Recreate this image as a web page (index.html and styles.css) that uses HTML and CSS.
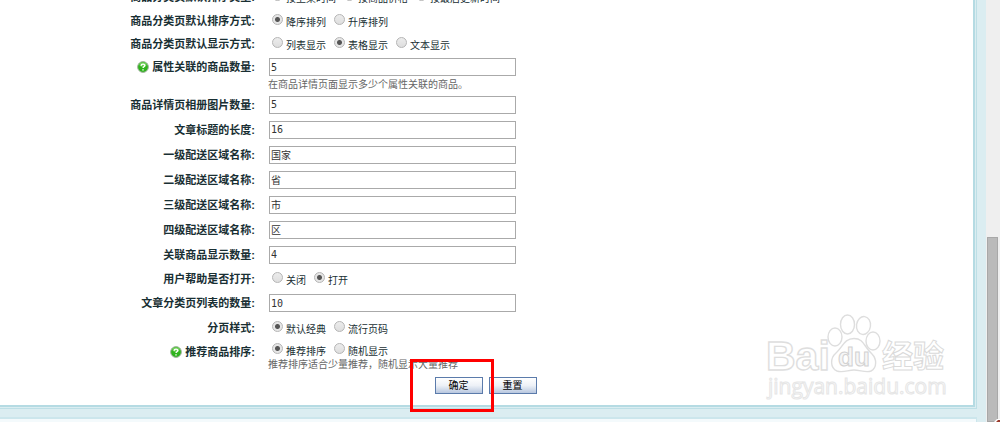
FILE: index.html
```html
<!DOCTYPE html>
<html lang="zh-CN">
<head>
<meta charset="utf-8">
<title>商店设置</title>
<link rel="stylesheet" href="styles.css">
</head>
<body>
<main class="page">
  <div class="panel">
    <form class="settings">
      <div class="row" role="radiogroup" aria-labelledby="l-type">
        <span class="name" id="l-type">商品分类页默认排序类型:</span>
        <div class="field options">
          <label class="option"><input type="radio" name="type" checked>按上架时间</label>
          <label class="option"><input type="radio" name="type">按商品价格</label>
          <label class="option"><input type="radio" name="type">按最后更新时间</label>
        </div>
      </div>
      <div class="row short" role="radiogroup" aria-labelledby="l-order">
        <span class="name" id="l-order">商品分类页默认排序方式:</span>
        <div class="field options">
          <label class="option"><input type="radio" name="order" checked>降序排列</label>
          <label class="option"><input type="radio" name="order">升序排列</label>
        </div>
      </div>
      <div class="row short" role="radiogroup" aria-labelledby="l-view">
        <span class="name" id="l-view">商品分类页默认显示方式:</span>
        <div class="field options">
          <label class="option"><input type="radio" name="view">列表显示</label>
          <label class="option"><input type="radio" name="view" checked>表格显示</label>
          <label class="option"><input type="radio" name="view">文本显示</label>
        </div>
      </div>
      <div class="row">
        <label class="name" for="related">
          <svg class="help" viewBox="0 0 12 12" aria-hidden="true"><circle cx="6" cy="6" r="5.4" fill="#2fb31c" stroke="#a5b3a3"/><ellipse cx="6" cy="3.6" rx="3.6" ry="2.4" fill="#6fd058"/><path d="M4.2 4.7C4.2 2.5 7.9 2.6 7.8 4.6 7.7 5.8 6 5.8 6 7.1M6 8.3v1.2" fill="none" stroke="#fff" stroke-width="1.4"/></svg>属性关联的商品数量:</label>
        <div class="field"><input class="text" id="related" type="text" value="5"></div>
        <p class="hint">在商品详情页面显示多少个属性关联的商品。</p>
      </div>
      <div class="row tall"><label class="name" for="album">商品详情页相册图片数量:</label><div class="field"><input class="text" id="album" type="text" value="5"></div></div>
      <div class="row tall"><label class="name" for="title">文章标题的长度:</label><div class="field"><input class="text" id="title" type="text" value="16"></div></div>
      <div class="row tall"><label class="name" for="area1">一级配送区域名称:</label><div class="field"><input class="text" id="area1" type="text" value="国家"></div></div>
      <div class="row tall"><label class="name" for="area2">二级配送区域名称:</label><div class="field"><input class="text" id="area2" type="text" value="省"></div></div>
      <div class="row tall"><label class="name" for="area3">三级配送区域名称:</label><div class="field"><input class="text" id="area3" type="text" value="市"></div></div>
      <div class="row tall"><label class="name" for="area4">四级配送区域名称:</label><div class="field"><input class="text" id="area4" type="text" value="区"></div></div>
      <div class="row tall"><label class="name" for="linked">关联商品显示数量:</label><div class="field"><input class="text" id="linked" type="text" value="4"></div></div>
      <div class="row" role="radiogroup" aria-labelledby="l-help">
        <span class="name" id="l-help">用户帮助是否打开:</span>
        <div class="field options">
          <label class="option"><input type="radio" name="help">关闭</label>
          <label class="option"><input type="radio" name="help" checked>打开</label>
        </div>
      </div>
      <div class="row"><label class="name" for="articles">文章分类页列表的数量:</label><div class="field"><input class="text" id="articles" type="text" value="10"></div></div>
      <div class="row tall" role="radiogroup" aria-labelledby="l-pager">
        <span class="name" id="l-pager">分页样式:</span>
        <div class="field options">
          <label class="option"><input type="radio" name="pager" checked>默认经典</label>
          <label class="option"><input type="radio" name="pager">流行页码</label>
        </div>
      </div>
      <div class="row short" role="radiogroup" aria-labelledby="l-rec">
        <span class="name" id="l-rec">
          <svg class="help" viewBox="0 0 12 12" aria-hidden="true"><circle cx="6" cy="6" r="5.4" fill="#2fb31c" stroke="#a5b3a3"/><ellipse cx="6" cy="3.6" rx="3.6" ry="2.4" fill="#6fd058"/><path d="M4.2 4.7C4.2 2.5 7.9 2.6 7.8 4.6 7.7 5.8 6 5.8 6 7.1M6 8.3v1.2" fill="none" stroke="#fff" stroke-width="1.4"/></svg>推荐商品排序:</span>
        <div class="field options compact">
          <label class="option"><input type="radio" name="rec" checked>推荐排序</label>
          <label class="option"><input type="radio" name="rec">随机显示</label>
        </div>
        <p class="hint close">推荐排序适合少量推荐，随机显示大量推荐</p>
      </div>
      <div class="actions">
        <span class="marked"><button class="button" type="submit">确定</button></span>
        <button class="button" type="reset">重置</button>
      </div>
    </form>
  </div>
  <div class="panel-next"></div>
  <svg class="watermark" viewBox="0 0 182 90" role="img" aria-label="Baidu 经验">
    <g fill="#fff" stroke="#dedede" stroke-width="1.4">
      <text class="wm-logo" x="1" y="57">Bai</text>
      <ellipse cx="70" cy="24" rx="7" ry="9"/>
      <ellipse cx="82.500" cy="11.500" rx="7" ry="9.500"/>
      <ellipse cx="98.500" cy="12.500" rx="7" ry="9" transform="rotate(8 98.500 12.500)"/>
      <ellipse cx="108" cy="28" rx="7" ry="9"/>
      <path d="M89 25.500C79 25.500 78 34 71 40C65 45 65 55 72 58C78 60 83 57 89 57C95 57 101 60 106 58C112 55 112 46 107 41C99 34 99 25.500 89 25.500Z"/>
    </g>
    <text class="wm-du" x="73" y="53">du</text>
    <text class="wm-cn" x="117" y="54">经验</text>
    <text class="wm-url" x="3" y="81">jingyan.baidu.com</text>
  </svg>
</main>
<div class="scrollbar" aria-hidden="true"><div class="thumb"></div>
  <svg class="corner" viewBox="0 0 6 3"><path d="M0 3L3 0H6V3Z" fill="#fff"/><path d="M2 3L4 1H6V3Z" fill="#9b3a2c"/></svg>
</div>
</body>
</html>
```
FILE: styles.css
```css
* { box-sizing: border-box; }
body {
  margin: 0;
  display: flex;
  height: 100vh;
  overflow: hidden;
  background: #dbedf1;
  color: #192f33;
  font: 10px/14px "Liberation Sans", "Noto Sans CJK SC", sans-serif;
}
.page {
  flex: 1;
  display: flex;
  flex-direction: column;
  position: relative;
  padding-right: 9px;
  min-width: 0;
}
.panel {
  padding: 0 1px 1px 0;
  border: solid #bddfe6;
  border-width: 0 1px 1px 0;
}
.settings {
  margin-top: -15px;
  padding-bottom: 11px;
  background: #fff;
  border: solid #b5dbe3;
  border-width: 0 2px 2px 0;
}
.row {
  display: grid;
  grid-template-columns: 256px 1fr;
  column-gap: 12px;
  align-items: center;
  grid-template-rows: 24px;
}
.row.tall { grid-template-rows: 25px; }
.row.short { grid-template-rows: 23px; }
.name {
  display: flex;
  justify-content: flex-end;
  align-items: center;
  gap: 3px;
  padding-right: 1px;
  font-size: 11px;
  font-weight: bold;
}
.help { width: 12px; height: 12px; }
.field { display: flex; min-width: 0; padding-left: 1px; }
.options { gap: 8px; padding: 2px 0 0 4px; }
.options.compact { padding: 0 0 2px 4px; }
.option { display: flex; align-items: flex-end; gap: 3px; }
.option input {
  appearance: none;
  width: 11px;
  height: 11px;
  margin: 0 0 5px;
  border: 1px solid #b5b5b5;
  border-radius: 50%;
  background: linear-gradient(#ececec, #dedede);
}
.option input:checked {
  background: radial-gradient(circle, #555 0 2px, #e6e6e6 3px);
}
.text {
  width: 247px;
  max-width: 100%;
  height: 18px;
  padding: 0 1px;
  border: 1px solid #aaa;
  background: #fff;
  color: #333;
  font: 10px/14px "DejaVu Sans Mono", "Noto Sans CJK SC", monospace;
}
.hint { grid-column: 2; margin: -1px 0 0; color: #666; }
.hint.close { margin-top: -5px; }
.actions {
  display: flex;
  justify-content: center;
  gap: 6px;
  padding: 5px 2px 0 0;
}
.marked { position: relative; display: flex; }
.marked::after {
  content: "";
  position: absolute;
  inset: -18px -11px -18px -25px;
  border: 3px solid #f00;
  pointer-events: none;
}
.button {
  width: 48px;
  height: 17px;
  padding: 0;
  border: 1px solid #5b7bab;
  background: linear-gradient(#fff, #edf1f7 50%, #b8c7df);
  color: #000;
  font: 10px/14px "Liberation Sans", "Noto Sans CJK SC", sans-serif;
}
.panel-next {
  flex: 1;
  margin-top: 8px;
  border: solid #cce6ec;
  border-width: 2px 1px 0 0;
  background: #f4fafc;
}
.watermark {
  position: absolute;
  right: 39px;
  top: 313px;
  width: 182px;
  height: 90px;
  pointer-events: none;
}
.wm-logo { font: bold 41px "Liberation Sans", sans-serif; }
.wm-du { font: bold 26px "Liberation Sans", sans-serif; fill: #f6f6f6; stroke: #d2d2d2; }
.wm-cn { font: bold 31px "Noto Sans CJK SC", sans-serif; fill: #fff; stroke: #dadada; }
.wm-url { font: 21px "Open Sans", sans-serif; fill: #fbfbfb; stroke: #e6e6e6; }
.scrollbar {
  position: relative;
  width: 14px;
  padding: 237px 2px 0 1px;
  background: #efefef;
}
.thumb { height: 100%; border: 1px solid #a8a8a8; background: #bababa; }
.corner { position: absolute; right: 0; bottom: 0; width: 6px; height: 3px; }
```
